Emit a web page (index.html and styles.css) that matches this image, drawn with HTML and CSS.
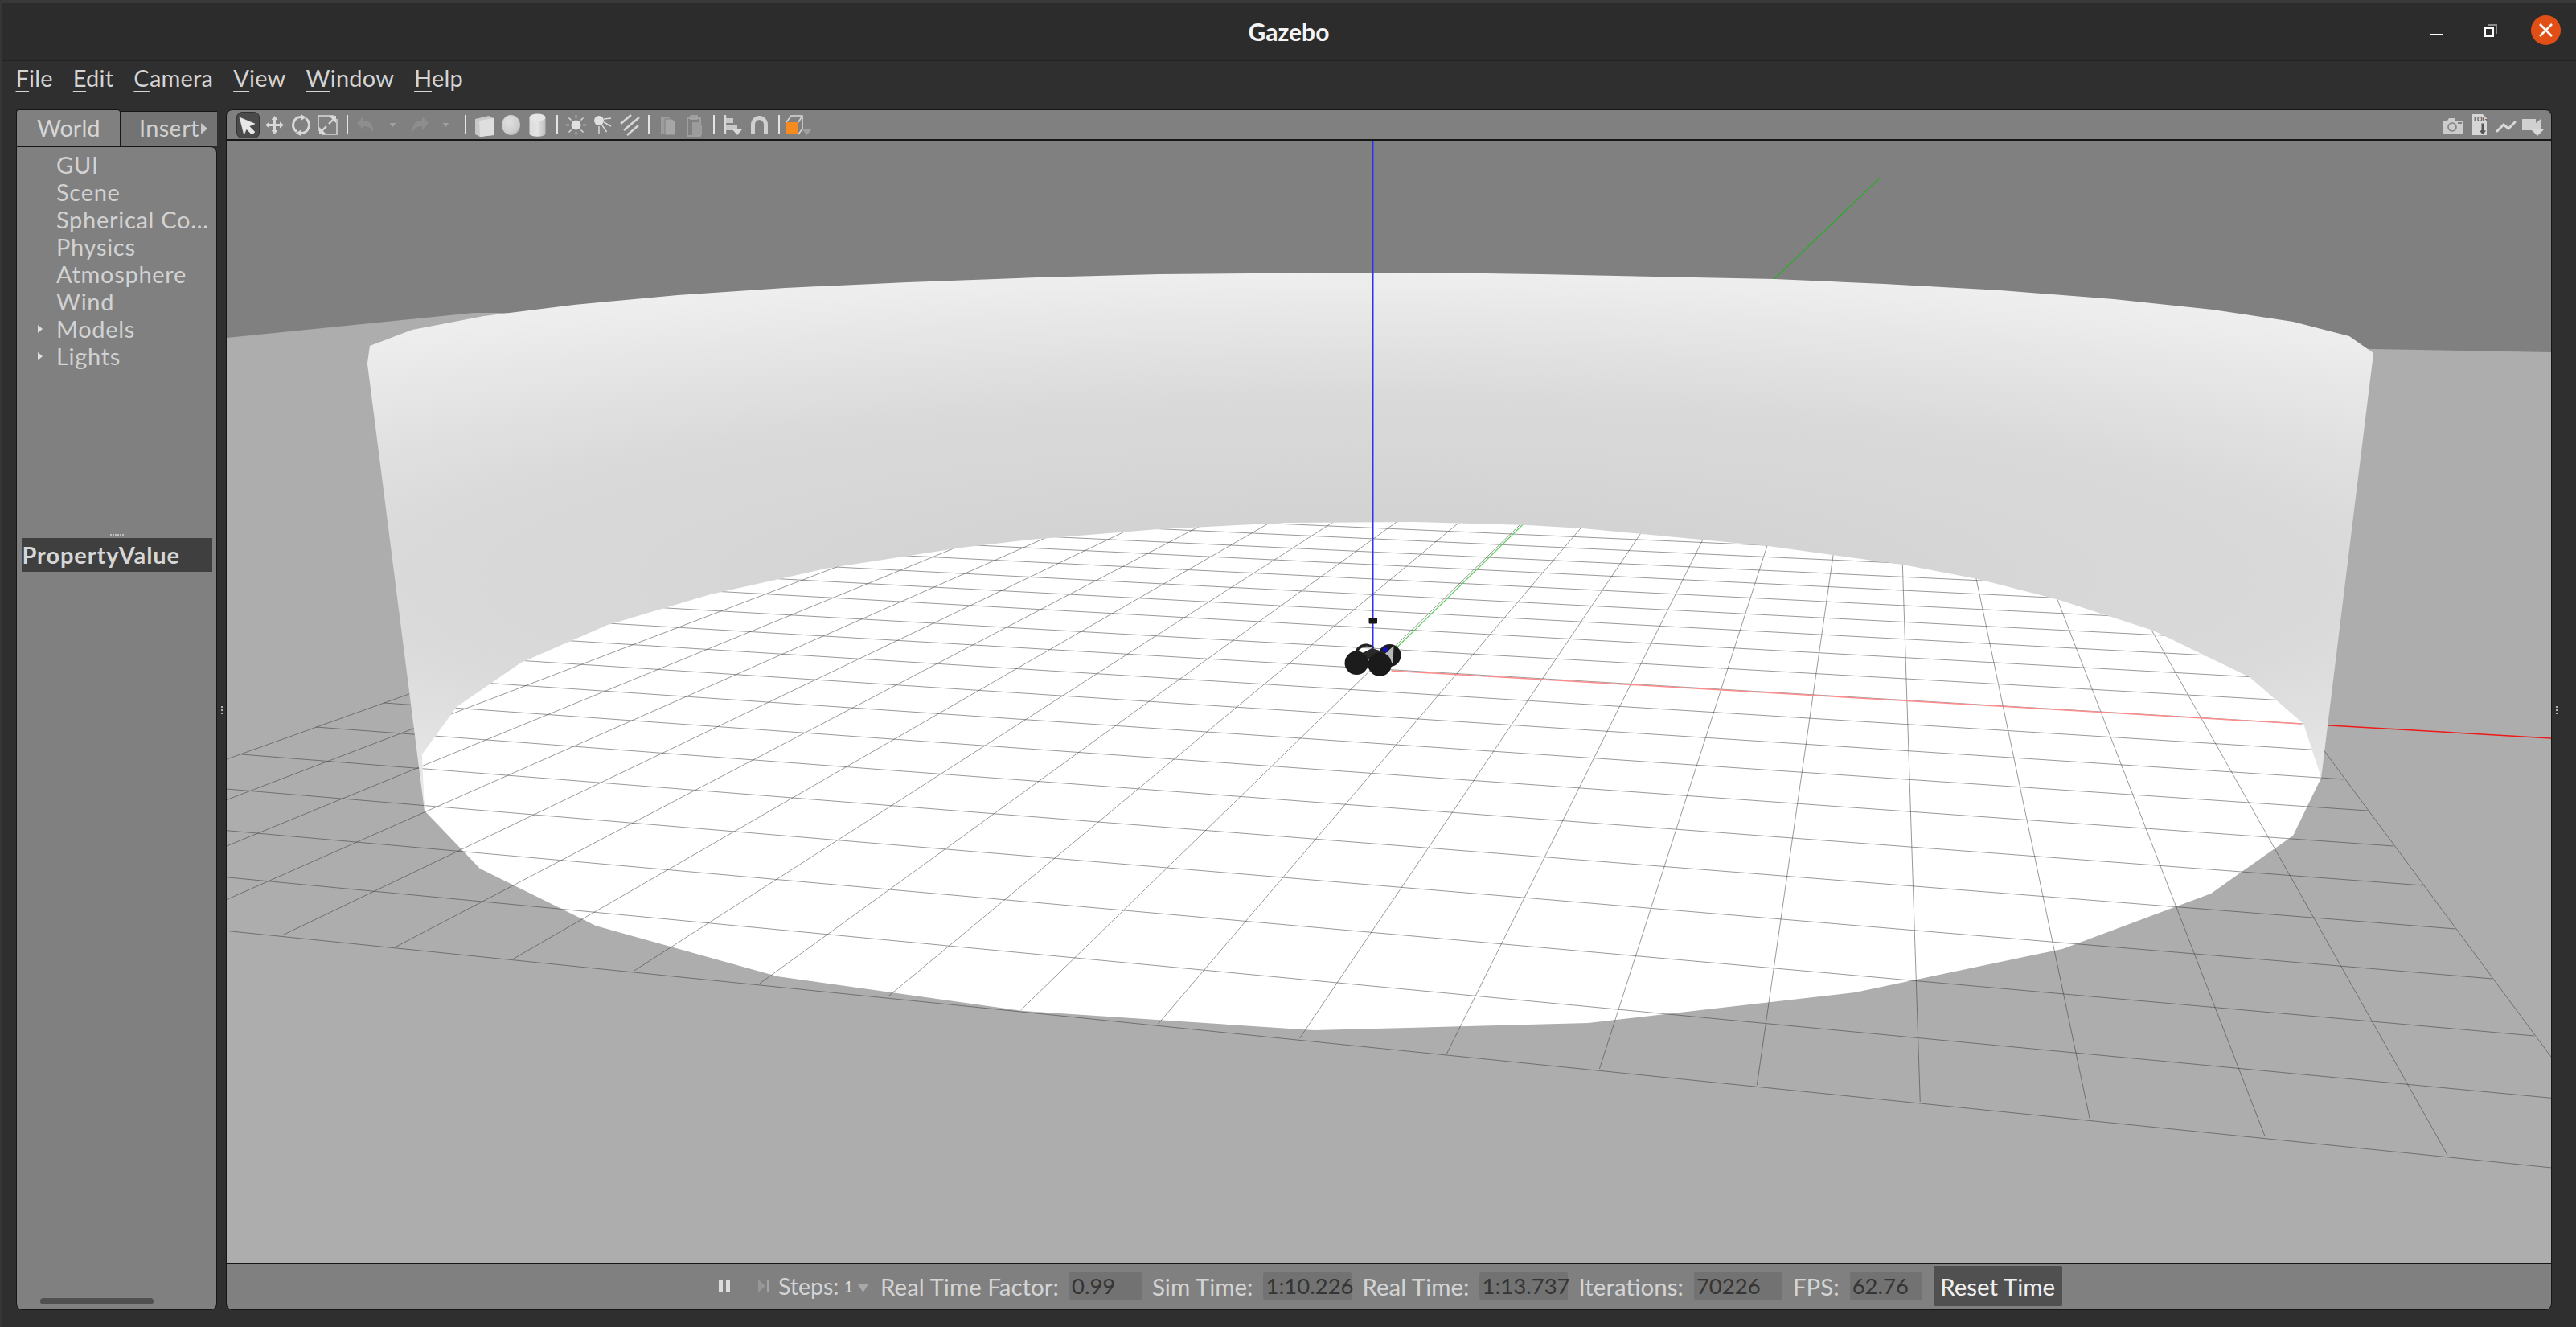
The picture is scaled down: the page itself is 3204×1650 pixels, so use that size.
FILE: index.html
```html
<!DOCTYPE html>
<html lang="en">
<head>
<meta charset="utf-8">
<title>Gazebo</title>
<link rel="stylesheet" href="styles.css">
</head>
<body>
<div class="window">
  <header class="titlebar">
    <div class="title">Gazebo</div>
    <div class="wm">
      <span class="wm-min"></span>
      <span class="wm-max"><span class="wm-max-back"></span><span class="wm-max-front"></span></span>
      <span class="wm-close">
        <svg width="37" height="37" viewBox="0 0 37 37"><path d="M11 11l15 15M26 11L11 26" stroke="#fff" stroke-width="2.6" fill="none"/></svg>
      </span>
    </div>
  </header>
  <nav class="menubar">
    <span class="menu"><u>F</u>ile</span>
    <span class="menu"><u>E</u>dit</span>
    <span class="menu"><u>C</u>amera</span>
    <span class="menu"><u>V</u>iew</span>
    <span class="menu"><u>W</u>indow</span>
    <span class="menu"><u>H</u>elp</span>
  </nav>
  <main class="main">
    <aside class="side">
      <div class="tabs">
        <div class="tab tab-on">World</div>
        <div class="tab tab-off">Insert
          <svg class="tab-arrows" width="46" height="22" viewBox="0 0 46 22"><path d="M10 3v17l-5-8.500z" fill="#6e6e6e"/><path d="M32 4v14l8-7z" fill="#c8c8c8"/></svg>
        </div>
      </div>
      <div class="panel">
        <ul class="tree">
          <li class="node">GUI</li>
          <li class="node">Scene</li>
          <li class="node">Spherical Co…</li>
          <li class="node">Physics</li>
          <li class="node">Atmosphere</li>
          <li class="node">Wind</li>
          <li class="node"><svg class="twist" width="8" height="10" viewBox="0 0 8 10"><path d="M1 0l6 5-6 5z" fill="#e0e0e0"/></svg>Models</li>
          <li class="node"><svg class="twist" width="8" height="10" viewBox="0 0 8 10"><path d="M1 0l6 5-6 5z" fill="#e0e0e0"/></svg>Lights</li>
        </ul>
        <div class="hgrip"><i></i><i></i><i></i><i></i><i></i><i></i></div>
        <div class="prop-head"><span>Property</span><span>Value</span></div>
        <div class="spacer"></div>
        <div class="hscroll"></div>
      </div>
    </aside>
    <div class="gutter"><i></i><i></i><i></i></div>
    <section class="view">
      <div class="toolbar">
        <div class="tb tb-sel"><svg width="29" height="33" viewBox="0 0 29 33"><path d="M4 7l19 8-7 3 7 7-3.500 3.500-7-7-3 7z" fill="#e8e8e8" stroke="#e8e8e8" stroke-width=".6"/></svg></div>
        <div class="tb"><svg width="33" height="33" viewBox="0 0 33 33"><path class="ic" d="M16.500 5l4 5h-2.500v5h5v-2.500l5 4-5 4v-2.500h-5v5h2.500l-4 5-4-5h2.500v-5h-5v2.500l-5-4 5-4v2.500h5v-5h-2.500z"/></svg></div>
        <div class="tb"><svg width="33" height="33" viewBox="0 0 33 33"><path class="ln3" d="M10 24a10 10 0 0 1 7-17.500M23 9a10 10 0 0 1-7 17.500"/><path class="ic" d="M16 3l7 4-7 4zM17 22l-7 4.500 7 4z"/></svg></div>
        <div class="tb"><svg width="33" height="33" viewBox="0 0 33 33"><path class="ln1" d="M5 24V5h19M28 9v19H9"/><path class="ln2" d="M18 15l7-7M15 18l-7 7"/><path class="ic" d="M18 5h9v9zM6 19v9h9z"/></svg></div>
        <span class="sep"></span>
        <div class="tb"><svg width="33" height="33" viewBox="0 0 33 33"><path class="dim" d="M5 14l8-8v5c8 0 13 5 12 15-2-6-6-8-12-8v5z"/></svg></div>
        <div class="tb"><svg width="33" height="33" viewBox="0 0 33 33"><path class="dim2" d="M12.500 14h8l-4 5z"/></svg></div>
        <div class="tb"><svg width="33" height="33" viewBox="0 0 33 33"><path class="dim" d="M28 14l-8-8v5c-8 0-13 5-12 15 2-6 6-8 12-8v5z"/></svg></div>
        <div class="tb"><svg width="33" height="33" viewBox="0 0 33 33"><path class="dim2" d="M12.500 14h8l-4 5z"/></svg></div>
        <span class="sep"></span>
        <div class="tb"><svg width="33" height="33" viewBox="0 0 33 33"><path d="M5 9l17-4 6 3v21l-17 2-6-3z" fill="#c8c8c8"/><path d="M10 11l18-3v21l-17 2z" fill="#dedede"/></svg></div>
        <div class="tb"><svg width="33" height="33" viewBox="0 0 33 33"><ellipse cx="16.500" cy="16.500" rx="11.500" ry="12.500" fill="url(#gSphere)"/></svg></div>
        <div class="tb"><svg width="33" height="33" viewBox="0 0 33 33"><path d="M6.500 7h20v20c0 5-20 5-20 0z" fill="url(#gCyl)"/><ellipse cx="16.500" cy="7" rx="10" ry="4.500" fill="#e6e6e6"/></svg></div>
        <span class="sep"></span>
        <div class="tb"><svg width="33" height="33" viewBox="0 0 33 33"><circle cx="16.500" cy="16.500" r="6" fill="#e0e0e0"/><path class="ln1" d="M16.500 4v4M16.500 25v4M4 16.500h4M25 16.500h4M7.500 7.500l3 3M22.500 22.500l3 3M25.500 7.500l-3 3M10.500 22.500l-3 3"/></svg></div>
        <div class="tb"><svg width="33" height="33" viewBox="0 0 33 33"><circle cx="12" cy="11" r="6" fill="#e0e0e0"/><path class="ln1" d="M18 9l9-1M18 13l9 5M15.500 16l6 9M12 18v9"/></svg></div>
        <div class="tb"><svg width="33" height="33" viewBox="0 0 33 33"><path class="ln2" d="M6 15L19 4M10 23L29 7M14 29L28 17"/></svg></div>
        <span class="sep"></span>
        <div class="tb"><svg width="33" height="33" viewBox="0 0 33 33"><path class="pg" d="M8 6h9l3 3v18H8z"/><path class="pg2" d="M13 9h9l4 4v16H13z"/></svg></div>
        <div class="tb"><svg width="33" height="33" viewBox="0 0 33 33"><path class="ln-dim" d="M8 8h16v22H8zM12 5h8v4h-8z"/><path class="pg" d="M14 13h8l4 4v12H14z"/></svg></div>
        <span class="sep"></span>
        <div class="tb"><svg width="33" height="33" viewBox="0 0 33 33"><path class="ln2" d="M7 4v24"/><path class="pg3" d="M8 8h9v6H8zM8 17h14v6H8z"/><path class="ic" d="M16 22h12l-6 7z"/></svg></div>
        <div class="tb"><svg width="33" height="33" viewBox="0 0 33 33"><path d="M6 28V16a10.500 11 0 0 1 21 0v12h-5V16a5.500 6 0 0 0-11 0v12z" fill="#cfcfcf"/></svg></div>
        <span class="sep"></span>
        <div class="tb"><svg width="36" height="33" viewBox="0 0 36 33"><rect x="3" y="13" width="15" height="15" fill="#f68a1e"/><path class="ln1" d="M3 13l6-8h14v16l-5 7M18 13l5-8"/><path class="dim2" d="M22 21h13l-6.500 8z"/></svg></div>
        <div class="tb-right">
          <div class="tb"><svg width="33" height="33" viewBox="0 0 33 33"><path d="M5 11h5l2-3h7l1 3h9v16H5z" fill="#cccccc"/><circle cx="16" cy="19" r="5" fill="none" stroke="#808080" stroke-width="1.600"/><rect x="23" y="13" width="5" height="2" fill="#808080"/></svg></div>
          <div class="tb"><svg width="33" height="33" viewBox="0 0 33 33"><path d="M8 3h13l5 5v21H8z" fill="#d6d6d6"/><text class="logtxt" x="10" y="12">LOG</text><path d="M19 14h4v9h3l-5 6-5-6h3z" fill="#555" stroke="#d6d6d6"/></svg></div>
          <div class="tb"><svg width="33" height="33" viewBox="0 0 33 33"><path class="ln3" d="M6 24l8-8 6 5 8-8"/></svg></div>
          <div class="tb"><svg width="33" height="33" viewBox="0 0 33 33"><path d="M4 9h17v5l6-5v14h-23z" fill="#d0d0d0"/><path class="ic" d="M15 22h16l-8 8z"/></svg></div>
        </div>
      </div>
      <svg class="scene" viewBox="281 175 2892 1395" preserveAspectRatio="none">
        <defs>
          <radialGradient id="gWall" gradientUnits="userSpaceOnUse" cx="0" cy="0" r="1" gradientTransform="translate(1700 720) scale(2060 380)">
            <stop offset="0" stop-color="#cfcfcf"/>
            <stop offset=".6" stop-color="#dadada"/>
            <stop offset="1" stop-color="#eeeeee"/>
          </radialGradient>
          <radialGradient id="gSphere" cx=".4" cy=".35" r=".75">
            <stop offset="0" stop-color="#e0e0e0"/>
            <stop offset=".7" stop-color="#cdcdcd"/>
            <stop offset="1" stop-color="#b0b0b0"/>
          </radialGradient>
          <linearGradient id="gCyl" x1="0" x2="1" y1="0" y2="0">
            <stop offset="0" stop-color="#dcdcdc"/>
            <stop offset=".5" stop-color="#e4e4e4"/>
            <stop offset="1" stop-color="#bcbcbc"/>
          </linearGradient>
        </defs>
        <rect x="281" y="175" width="2892" height="1395" fill="#808080"/>
        <polygon points="281,420 588,389 1000,389 2950,434 3173,438 3173,1570 281,1570" fill="#adadad"/>
        <polygon points="527,1008 596,1080 740,1151 966,1214 1272,1257 1634,1281 1975,1272 2307,1234 2565,1180 2750,1111 2852,1039 2887,967 2800,600 500,600" fill="#ffffff"/>
        <path class="grid" d="M-185 1110L3282 1463M-44 1060L3212 1369M82 1015L3152 1288M197 974L3100 1217M299 938L3054 1155M392 904L3014 1101M477 874L2977 1052M556 846L2945 1008M627 820L2916 969M696 796L2889 933M755 775L2865 900M811 755L2843 871M868 734L2823 843M917 717L2804 818M961 701L2787 795M1006 685L2771 773M1048 670L2756 753M1085 657L2742 735M1123 643L2729 717M1155 632L2717 701M1188 620L2706 686"/>
        <path class="grid" d="M-181 1109L1132 640M-53 1122L1210 640M78 1135L1288 640M212 1149L1365 640M350 1163L1442 640M492 1177L1519 640M638 1192L1596 640M788 1207L1672 640M944 1223L1749 640M1104 1239L1826 640M1269 1256L1903 640M1440 1273L1980 640M1616 1291L2056 640M1799 1310L2133 640M1989 1329L2210 640M2185 1349L2287 640M2388 1370L2364 640M2599 1391L2441 640M2817 1413L2518 640M3044 1436L2595 640M3282 1461L2673 640"/>
        <path class="ax-red-soft" d="M1730 834L2862 900"/>
        <path class="ax-red" d="M2880 901L3173 918"/>
        <path class="ax-green-soft" d="M1737 805L1900 646"/>
        <path class="ax-green" d="M2190 363L2338 221"/>
        <polygon points="456,452 459,430 512,410 601,393 713,379 842,367 976,358 1128,351 1289,345 1441,341 1680,339 1780,339 1916,341 2207,347 2343,353 2488,361 2629,372 2752,385 2852,400 2922,418 2952,439 2887,967 2865,900 2798,842 2678,784 2561,746 2460,720 2366,702 2199,679 1968,657 1900,653 1760,649 1600,650 1440,658 1280,671 1195,681 1026,707 883,739 755,777 647,824 567,879 524,938 527,1008" fill="url(#gWall)"/>
        <path class="ax-blue" d="M1707 175V808"/>
        <rect x="1702" y="768" width="10.500" height="7.500" rx="1" fill="#161616"/>
        <path d="M1685 809c5-9 14-10 20-7 2 1 3 2 4 3l-1 1c-7-4-15-3-20 5z" fill="#222222"/>
        <circle cx="1728" cy="815" r="14" fill="#1a1a1a"/>
        <path d="M1692 813L1706 806 1722 811 1722 820 1700 820z" fill="#2a2a2a"/>
        <path d="M1722 813L1733 803 1732 826z" fill="#b8b8b8"/>
        <circle cx="1686.700" cy="824.300" r="14.700" fill="#1c1c1c"/>
        <circle cx="1715.700" cy="826" r="14.700" fill="#1a1a1a"/>
        <path d="M1719 810c0-6 5-9 6-3l1 4z" fill="#1010c0"/>
      </svg>
      <footer class="status">
        <svg class="st-pause" width="14" height="16" viewBox="0 0 14 16"><path d="M0 0h5v16H0zM9 0h5v16H9z" fill="#dcdcdc"/></svg>
        <svg class="st-step" width="14" height="16" viewBox="0 0 14 16"><path d="M0 0l9 8-9 8z" fill="#979797"/><path d="M11 0h3v16h-3z" fill="#a4a4a4"/></svg>
        <span class="lbl st-steps">Steps:</span>
        <span class="st-one">1</span>
        <svg class="st-drop" width="13" height="10" viewBox="0 0 13 10"><path d="M0 0h13l-6.500 10z" fill="#a8a8a8"/></svg>
        <span class="lbl st-rtf">Real Time Factor:</span>
        <span class="val val-rtf">0.99</span>
        <span class="lbl st-sim">Sim Time:</span>
        <span class="val val-sim">1:10.226</span>
        <span class="lbl st-real">Real Time:</span>
        <span class="val val-real">1:13.737</span>
        <span class="lbl st-iter">Iterations:</span>
        <span class="val val-iter">70226</span>
        <span class="lbl st-fps">FPS:</span>
        <span class="val val-fps">62.76</span>
        <button class="reset">Reset Time</button>
      </footer>
    </section>
    <div class="gutter gutter-r"><i></i><i></i><i></i></div>
  </main>
</div>
</body>
</html>
```
FILE: styles.css
```css
* { box-sizing: border-box; }
html, body { margin: 0; padding: 0; height: 100%; }
body { background: #2f2f2f; font-family: "Lato", "Liberation Sans", sans-serif; color: #d0d0d0; overflow: hidden; }
.window { display: flex; flex-direction: column; width: 3204px; height: 1650px; border-left: 2px solid #363636; }

.titlebar { position: relative; flex: none; height: 76px; background: #2c2c2c; border-top: 4px solid #393939; border-bottom: 1px solid #232323; display: flex; align-items: center; justify-content: center; padding-bottom: 2px; }
.title { color: #f4f4f4; font-weight: 700; font-size: 30px; }
.wm { position: absolute; top: 0; left: 0; width: 100%; height: 100%; }
.wm-min { position: absolute; left: 3020px; top: 38px; width: 16px; height: 2px; background: #fff; }
.wm-max { position: absolute; left: 3088px; top: 26px; width: 16px; height: 16px; }
.wm-max-back { position: absolute; right: 0; top: 0; width: 12px; height: 12px; border-top: 2px solid #8a8a8a; border-right: 2px solid #8a8a8a; }
.wm-max-front { position: absolute; left: 0; top: 4px; width: 12px; height: 12px; border: 2px solid #fff; }
.wm-close { position: absolute; left: 3146px; top: 15px; width: 37px; height: 37px; border-radius: 50%; background: #e14f17; display: block; }
.wm-close svg { display: block; }

.menubar { flex: none; height: 60px; display: flex; align-items: flex-start; padding: 3px 0 0 5px; }
.menu { font-size: 29px; letter-spacing: .2px; line-height: 36px; padding: 0 12.500px; color: #d4d4d4; }
.menu u { text-decoration-thickness: 2px; text-underline-offset: 5px; text-decoration-color: #d4d4d4; }

.main { flex: 1; display: flex; padding: 0 19px 21px 18px; min-height: 0; }
.side { flex: none; width: 250px; display: flex; flex-direction: column; }
.tabs { flex: none; height: 46px; display: flex; align-items: flex-end; }
.tab { font-size: 29px; }
.tab-on { width: 130px; height: 46px; background: #808080; border: 1px solid #161616; border-bottom: 0; border-radius: 4px 4px 0 0; padding: 5px 0 0 25px; line-height: 34px; color: #d6d6d6; }
.tab-off { position: relative; width: 120px; height: 44px; background: #737373; border-top: 1px solid #161616; padding: 3px 0 0 23px; line-height: 34px; letter-spacing: .3px; color: #d0d0d0; overflow: hidden; }
.tab-arrows { position: absolute; right: 6px; top: 10px; }

.panel { flex: 1; display: flex; flex-direction: column; background: #808080; border-radius: 0 8px 8px 8px; border: 1px solid #161616; border-top: 1px solid #161616; min-height: 0; }
.tree { flex: none; list-style: none; margin: 0; padding: 5px 0 0; height: 478px; }
.node { position: relative; height: 34px; line-height: 34px; font-size: 29px; letter-spacing: .7px; padding-left: 49px; color: #d2d2d2; white-space: nowrap; }
.twist { position: absolute; left: 25px; top: 12px; }
.hgrip { flex: none; height: 8px; display: flex; justify-content: center; align-items: center; gap: 1px; }
.hgrip i { width: 2px; height: 2px; background: #bdbdbd; }
.prop-head { flex: none; align-self: center; width: 237px; height: 42px; background: #3f3f3f; font-size: 29px; letter-spacing: .9px; font-weight: 700; line-height: 42px; color: #d6d6d6; padding-left: 1px; }
.spacer { flex: 1; }
.hscroll { flex: none; width: 141px; height: 8px; margin: 0 0 6px 29px; background: #505050; border-radius: 4px; }

.gutter { flex: none; width: 11px; display: flex; flex-direction: column; justify-content: center; align-items: center; gap: 2px; }
.gutter i { width: 2px; height: 2px; background: #b0b0b0; }
.gutter-r { width: 11px; }

.view { flex: 1; min-width: 0; display: flex; flex-direction: column; background: #808080; border: 1px solid #161616; border-radius: 8px 8px 8px 8px; overflow: hidden; }
.toolbar { flex: none; height: 38px; display: flex; align-items: center; padding-left: 10px; border-bottom: 2px solid #161616; }
.tb { flex: none; width: 33px; height: 33px; display: flex; align-items: center; justify-content: center; }
.tb svg { display: block; flex: none; }
.tb-sel { width: 29px; margin: 0 2px; background: #4a4a4a; border: 1px solid #333; border-radius: 7px; }
.sep { flex: none; width: 2px; height: 24px; margin: 0 6px 0 7px; background: #e4e4e4; }
.tb-right { margin-left: auto; margin-right: 7px; display: flex; }
.ic { fill: #d8d8d8; }
.dim { fill: #8e8e8e; }
.dim2 { fill: #a0a0a0; }
.pg { fill: #9c9c9c; }
.pg2 { fill: #a6a6a6; stroke: #808080; stroke-width: 1; }
.pg3 { fill: #c8c8c8; }
.ln1, .ln2, .ln3, .ln-dim { fill: none; stroke: #d8d8d8; }
.ln1 { stroke-width: 1.500; }
.ln2 { stroke-width: 2.400; }
.ln3 { stroke-width: 3; stroke-linecap: round; }
.ln-dim { stroke: #a8a8a8; stroke-width: 1.500; }
.logtxt { font-size: 8px; font-weight: 700; fill: #555; font-family: "Lato", sans-serif; }

.scene { flex: 1; display: block; width: 100%; min-height: 0; }
.grid { stroke: rgba(50, 50, 50, .5); stroke-width: 1; fill: none; }
.ax-red-soft { stroke: #ff8c8c; stroke-width: 1.500; fill: none; }
.ax-red { stroke: #f01818; stroke-width: 1.500; fill: none; }
.ax-green-soft { stroke: #5cd05c; stroke-width: 1.200; fill: none; }
.ax-green { stroke: #20b020; stroke-width: 1.200; fill: none; }
.ax-blue { stroke: #3030f0; stroke-width: 2; fill: none; }

.status { flex: none; height: 58px; display: flex; align-items: center; padding: 0 0 2px 612px; border-top: 2px solid #161616; font-size: 29.500px; }
.lbl { color: #d4d4d4; white-space: nowrap; }
.st-pause { flex: none; margin-right: 35px; }
.st-step { flex: none; margin-right: 11px; }
.st-steps { font-size: 28.500px; }
.st-one { font-size: 20px; color: #dcdcdc; margin: 0 6px; }
.st-drop { flex: none; margin: 6px 15px 0 0; }
.val { height: 36px; margin: 0 13px; padding-left: 3px; line-height: 36px; border-radius: 4px; background: #727272; color: #353535; font-size: 27.500px; white-space: nowrap; }
.val-rtf { width: 90px; }
.val-sim { width: 110px; }
.val-real { width: 110px; }
.val-iter { width: 110px; }
.val-fps { width: 90px; margin-right: 14px; }
.reset { width: 160px; height: 50px; border: 0; border-radius: 2px; background: #505050; color: #f0f0f0; font: inherit; padding: 0; }
```
